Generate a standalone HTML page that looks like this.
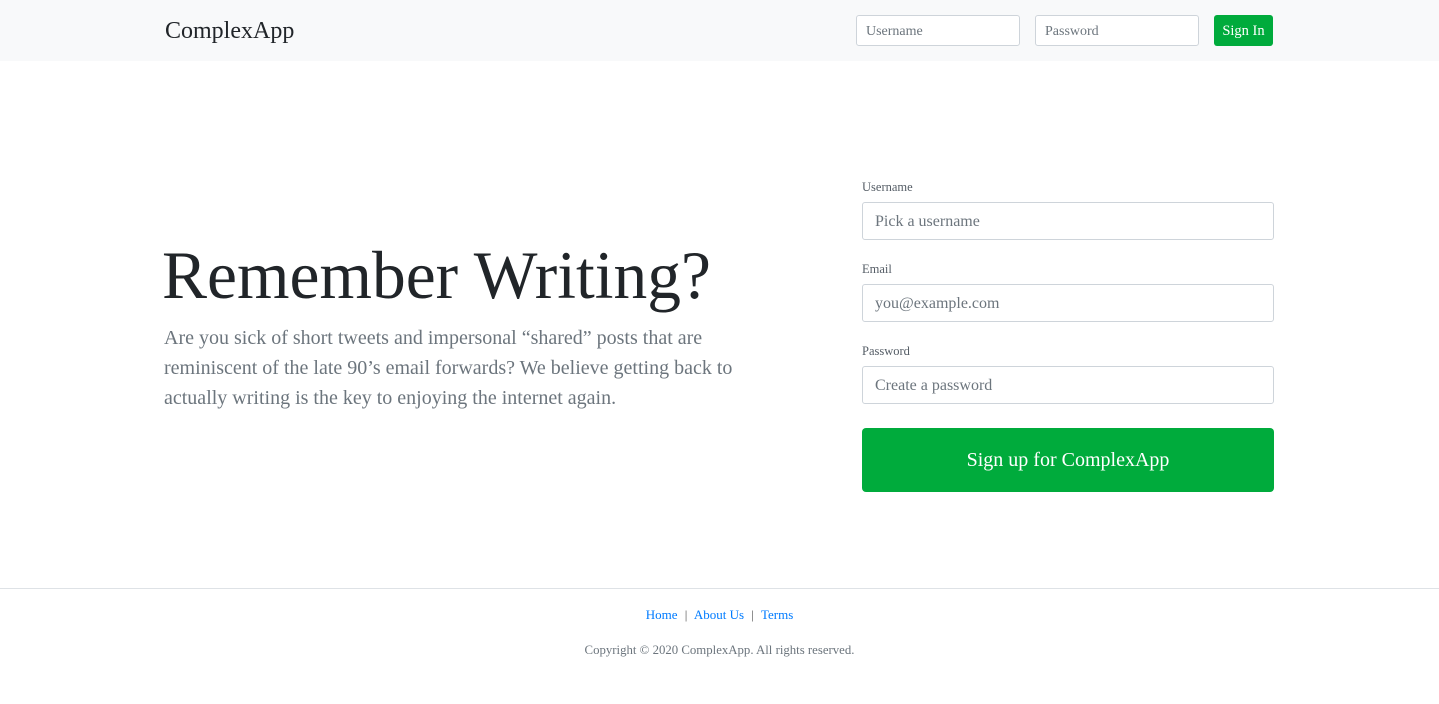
<!DOCTYPE html>
<html><head><meta charset="utf-8"><style>
*{box-sizing:border-box;margin:0;padding:0}
body{width:1439px;height:704px;background:#fff;font-family:"Liberation Serif",serif;color:#212529;position:relative;overflow:hidden}
.a{position:absolute}
.hdr{left:0;top:0;width:1439px;height:61px;background:#f8f9fa}
.inp{position:absolute;border:1px solid #ced4da;border-radius:3px;background:#fff;color:#6c757d;display:flex;align-items:center}
.btn{position:absolute;background:#00ab3c;color:#fff;border-radius:3px;display:flex;align-items:center;justify-content:center}
.lbl{position:absolute;font-size:12.5px;color:#555d66}
</style></head><body>
<div class="a hdr"></div>
<div class="a" style="left:165px;top:18px;font-size:24px;color:#212529">ComplexApp</div>
<div class="inp" style="left:856px;top:15px;width:164px;height:31px;padding-left:9px;padding-top:2px;font-size:14px">Username</div>
<div class="inp" style="left:1035px;top:15px;width:164px;height:31px;padding-left:9px;padding-top:2px;font-size:14px">Password</div>
<div class="btn" style="left:1214px;top:15px;width:59px;height:31px;padding-top:2px;font-size:14.5px">Sign In</div>

<div class="a" style="left:162px;top:234px;font-size:67.5px;line-height:84px;color:#212529">Remember Writing?</div>
<div class="a" style="left:164px;top:323px;width:600px;font-size:20px;line-height:30px;color:#6c757d">Are you sick of short tweets and impersonal “shared” posts that are reminiscent of the late 90’s email forwards? We believe getting back to actually writing is the key to enjoying the internet again.</div>

<div class="lbl" style="left:862px;top:180px">Username</div>
<div class="inp" style="left:862px;top:202px;width:412px;height:38px;padding-left:12px;padding-top:1px;font-size:16px">Pick a username</div>
<div class="lbl" style="left:862px;top:262px">Email</div>
<div class="inp" style="left:862px;top:284px;width:412px;height:38px;padding-left:12px;padding-top:1px;font-size:16px">you@example.com</div>
<div class="lbl" style="left:862px;top:344px">Password</div>
<div class="inp" style="left:862px;top:366px;width:412px;height:38px;padding-left:12px;padding-top:1px;font-size:16px">Create a password</div>
<div class="btn" style="left:862px;top:428px;width:412px;height:64px;font-size:20px;border-radius:4px">Sign up for ComplexApp</div>

<div class="a" style="left:0;top:588px;width:1439px;border-top:1px solid #dee2e6"></div>
<div class="a" style="left:0;top:607px;width:1439px;text-align:center;font-size:13px;color:#007bff">Home <span style="color:#555;margin:0 4px">|</span> About Us <span style="color:#555;margin:0 4px">|</span> Terms</div>
<div class="a" style="left:0;top:643px;width:1439px;text-align:center;font-size:12.8px;color:#6c757d">Copyright © 2020 ComplexApp. All rights reserved.</div>
</body></html>
